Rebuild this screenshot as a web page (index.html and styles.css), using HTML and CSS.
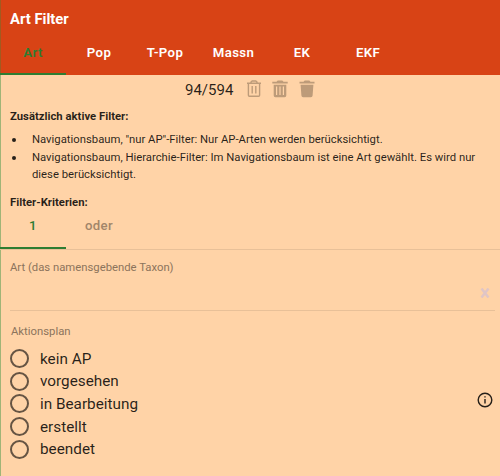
FILE: index.html
```html
<!DOCTYPE html>
<html lang="de">
<head>
<meta charset="utf-8">
<title>Art Filter</title>
<link rel="stylesheet" href="styles.css">
</head>
<body>
<div class="panel">
  <header class="header">
    <h1 class="title">Art Filter</h1>
    <nav class="tabs">
      <span class="tab active">Art</span>
      <span class="tab">Pop</span>
      <span class="tab">T-Pop</span>
      <span class="tab wide">Massn</span>
      <span class="tab">EK</span>
      <span class="tab">EKF</span>
    </nav>
  </header>
  <div class="toolbar">
    <span class="count">94/594</span>
    <svg class="trash" viewBox="0 0 16 18"><path fill="none" stroke="currentColor" stroke-width="1.4" d="M1 3.300h14M5 3V2L6.200 1h3.600L11 2v1M2.400 3.500v11.800q0 1 1 1h9.200q1 0 1-1V3.500M6.200 6v7.500M9.800 6v7.500"/></svg>
    <svg class="trash" viewBox="0 0 16 18"><path fill="currentColor" fill-rule="evenodd" d="M.3 1.8h4.2L5.7.6h4.6l1.2 1.2h4.2v1.8H.3zM1.700 4.700h12.600V15.500q0 1.700-1.700 1.700H3.400q-1.700 0-1.700-1.700zM4 6.500v8.500h1.200V6.500zM7.400 6.500v8.500h1.200V6.500zM10.800 6.500v8.500H12V6.500z"/></svg>
    <svg class="trash" viewBox="0 0 16 18"><path fill="currentColor" d="M.5 1.800h4L5.700.6h4.600l1.200 1.200h4v1.800H.5zM1.600 4.700h12.800l-.8 10.800q-.1 1.700-1.700 1.700H4.100q-1.600 0-1.700-1.700z"/></svg>
  </div>
  <section class="info">
    <h2 class="heading">Zusätzlich aktive Filter:</h2>
    <ul class="list">
      <li>Navigationsbaum, "nur AP"-Filter: Nur AP-Arten werden berücksichtigt.</li>
      <li>Navigationsbaum, Hierarchie-Filter: Im Navigationsbaum ist eine Art gewählt. Es wird nur diese berücksichtigt.</li>
    </ul>
    <h2 class="heading">Filter-Kriterien:</h2>
  </section>
  <nav class="tabs criteria">
    <span class="tab active">1</span>
    <span class="tab">oder</span>
  </nav>
  <div class="field">
    <span class="label">Art (das namensgebende Taxon)</span>
    <svg class="clear" viewBox="0 0 10 10"><path d="M1.500 .5 8.500 9.500M8.500 .5 1.500 9.500" stroke="currentColor" stroke-width="2.500"/></svg>
  </div>
  <div class="plan">
    <div class="group">
      <span class="label plan-label">Aktionsplan</span>
      <div class="options">
        <div class="option"><i class="radio"></i>kein AP</div>
        <div class="option"><i class="radio"></i>vorgesehen</div>
        <div class="option"><i class="radio"></i>in Bearbeitung</div>
        <div class="option"><i class="radio"></i>erstellt</div>
        <div class="option"><i class="radio"></i>beendet</div>
      </div>
    </div>
    <svg class="help" viewBox="0 0 16 16"><circle cx="8" cy="8" r="6.800" fill="none" stroke="currentColor" stroke-width="1.400"/><path fill="currentColor" d="M7.300 4.200h1.400v1.400H7.300zM7.300 7h1.400v4.500H7.300z"/></svg>
  </div>
</div>
</body>
</html>
```
FILE: styles.css
```css
* { box-sizing: border-box; }
body {
  margin: 0;
  font-family: Roboto, "Liberation Sans", sans-serif;
  color: rgba(0, 0, 0, 0.85);
  background: #ffd3a7;
}
.panel {
  height: 476px;
  border-left: 1px solid #a0b477;
}
.header {
  height: 75px;
  margin-left: -1px;
  padding-top: 9px;
  color: #fff;
  background: #d84315;
  border-left: 1px solid #a15a20;
}
.title {
  margin: 0 0 0 9px;
  font-size: 14.800px;
  line-height: 20px;
  font-weight: 700;
}
.tabs {
  display: flex;
  height: 46px;
  margin-left: -1px;
}
.tab {
  width: 66px;
  padding-top: 14px;
  text-align: center;
  font-size: 13.200px;
  line-height: 20px;
  font-weight: 600;
  letter-spacing: 0.350px;
}
.tab.wide { width: 71px; }
.tab.active {
  color: #2e7d32;
  border-bottom: 2px solid #2e7d32;
}
.toolbar {
  display: flex;
  align-items: center;
  height: 28px;
  padding-left: 184px;
}
.count {
  width: 60.500px;
  padding-top: 1px;
  font-size: 15px;
}
.trash {
  width: 16px;
  height: 18px;
  margin-right: 10.500px;
  color: #bd9b79;
}
.info { padding: 4px 20px 0 9px; }
.heading {
  margin: 0;
  font-size: 11.300px;
  line-height: 20px;
  font-weight: 700;
}
.list {
  margin: 4px 0 10px;
  padding: 0;
  list-style: none;
  font-size: 11.300px;
  line-height: 17px;
}
.list li { display: flex; }
.list li::before {
  content: "";
  flex: none;
  width: 4px;
  height: 4px;
  margin: 7px 16px 0 2px;
  border-radius: 50%;
  background: currentColor;
}
.list li + li { margin-top: 0.500px; }
.criteria {
  height: 37px;
  border-bottom: 1px solid #e8c098;
}
.criteria .tab {
  padding-top: 3px;
  color: #a2866a;
  font-weight: 500;
  letter-spacing: 0.400px;
}
.criteria .tab.active { color: #2e7d32; }
.field {
  display: flex;
  justify-content: space-between;
  height: 61px;
  margin: 0 5px 0 9px;
  padding-top: 9px;
  border-bottom: 1px solid #e8c098;
}
.label {
  display: block;
  font-size: 11.300px;
  line-height: 17px;
  color: #8c745c;
}
.plan-label { padding-left: 1px; }
.clear {
  width: 10px;
  height: 10px;
  margin: 29px 5px 0 0;
  color: #e0c5c6;
}
.plan {
  display: flex;
  justify-content: space-between;
  align-items: center;
  padding: 12px 7px 0 9px;
}
.options { margin-top: 8px; }
.option {
  display: flex;
  align-items: center;
  height: 22.600px;
  font-size: 15.300px;
}
.radio {
  width: 19px;
  height: 19px;
  margin-right: 11px;
  border: 2px solid #665443;
  border-radius: 50%;
}
.help {
  width: 16px;
  height: 16px;
  margin-top: 17px;
}
```
